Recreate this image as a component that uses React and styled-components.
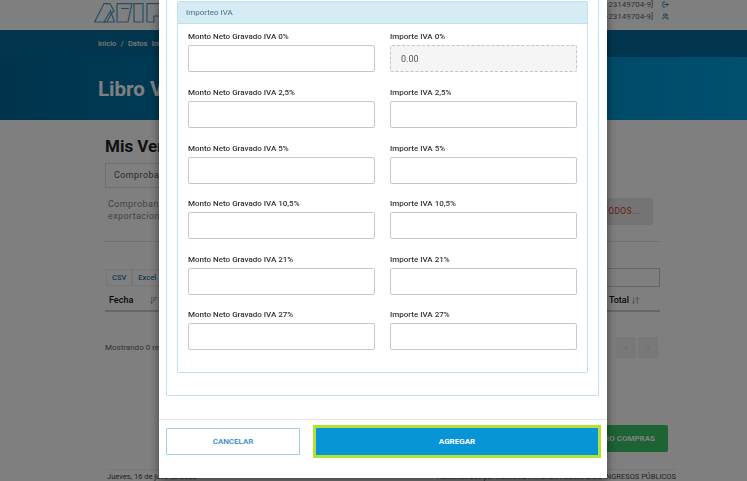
import React from "react";
import styled, { createGlobalStyle } from "styled-components";
import { LogOut, Users, ArrowDownUp, ArrowDownWideNarrow } from "lucide-react";

const Global = createGlobalStyle`
  html, body { margin: 0; padding: 0; height: 481px; overflow: hidden; background: #fff; }
  body { font-family: Roboto, "Liberation Sans", sans-serif; }
  * { box-sizing: border-box; }
`;

const Page = styled.div`
  width: 747px;
  height: 481px;
  overflow: hidden;
  display: flex;
  flex-direction: column;
  background: #fff;
`;
const TopBar = styled.header`
  height: 30px;
  flex: none;
  display: flex;
  align-items: flex-start;
  justify-content: space-between;
  padding: 3px 78px 0 94px;
`;
const UserList = styled.div`
  display: flex;
  flex-direction: column;
  gap: 3px;
  margin-top: -3px;
`;
const UserRow = styled.div`
  display: flex;
  align-items: center;
  gap: 9px;
  height: 9px;
  font-size: 8px;
  color: #666;
  svg { color: #1f7fb5; }
`;
const Crumbs = styled.nav`
  height: 27px;
  flex: none;
  background: #046c9e;
  padding-left: 98px;
  display: flex;
  align-items: center;
  font-size: 7.5px;
  font-weight: 500;
  color: #eee;
  word-spacing: 2.5px;
`;
const Banner = styled.div`
  height: 63px;
  flex: none;
  background: linear-gradient(90deg, #00689a 0%, #009fdf 100%);
  padding-left: 98px;
  display: flex;
  align-items: center;
`;
const BannerTitle = styled.h1`
  margin: 0;
  font-size: 20.5px;
  font-weight: 700;
  color: #fff;
`;
const Content = styled.main`
  flex: 1;
  padding: 16px 87px 0 105px;
  display: flex;
  flex-direction: column;
  min-height: 0;
`;
const SectionTitle = styled.h2`
  margin: 0;
  font-size: 17px;
  line-height: 20px;
  font-weight: 700;
  color: #222;
`;
const TabBox = styled.div`
  margin-top: 7px;
  height: 25px;
  width: 160px;
  border: 1px solid #ddd;
  padding-left: 8px;
  font-size: 9px;
  line-height: 23px;
  color: #555;
  letter-spacing: 0.4px;
`;
const IntroRow = styled.div`
  display: flex;
  justify-content: space-between;
  align-items: flex-start;
  margin-top: 10px;
  height: 45px;
  border-bottom: 1px dotted #ccc;
`;
const IntroText = styled.p`
  margin: 0 0 0 3px;
  width: 200px;
  font-size: 9px;
  line-height: 12px;
  color: #888;
  letter-spacing: 0.4px;
`;
const ResetButton = styled.div`
  width: 120px;
  height: 27px;
  margin-right: 7px;
  background: #e8e8e8;
  border-radius: 2px;
  color: #d9342b;
  font-size: 8.5px;
  line-height: 27px;
  text-align: right;
  padding-right: 13px;
  letter-spacing: 0.4px;
`;
const ToolRow = styled.div`
  display: flex;
  justify-content: space-between;
  align-items: center;
  margin-top: 26px;
  height: 20px;
`;
const ExportGroup = styled.div`
  display: flex;
  height: 17px;
  margin-left: 1px;
`;
const ExportBtn = styled.span`
  padding: 0 5px;
  border: 1px solid #eee;
  font-size: 7.5px;
  line-height: 15px;
  color: #2f74a8;
  font-weight: 500;
`;
const Search = styled.div`
  width: 150px;
  height: 19px;
  border: 1px solid #ccc;
`;
const TableHead = styled.div`
  display: flex;
  justify-content: space-between;
  align-items: center;
  height: 25px;
  border-bottom: 2px solid #ccc;
  padding: 3px 20px 0 4px;
  font-size: 9px;
  font-weight: 500;
  color: #111;
`;
const HeadCell = styled.span`
  display: flex;
  align-items: center;
  gap: ${(p) => p.$gap}px;
  svg { color: #999; }
`;
const PagerRow = styled.div`
  display: flex;
  justify-content: space-between;
  align-items: center;
  margin-top: 25px;
  height: 21px;
  font-size: 8px;
  color: #666;
`;
const Pager = styled.div`
  display: flex;
  gap: 2px;
  margin-right: 2px;
`;
const PageBtn = styled.span`
  width: 20px;
  height: 21px;
  background: #f0f0f0;
  color: #ccc;
  font-size: 9px;
  line-height: 21px;
  text-align: center;
`;
const ActionRow = styled.div`
  display: flex;
  justify-content: flex-end;
  margin: 67px -8px 0 0;
`;
const BuyButton = styled.div`
  width: 140px;
  height: 27px;
  background: #3ac667;
  border-radius: 2px;
  color: #fff;
  font-size: 8px;
  font-weight: 700;
  line-height: 27px;
  text-align: right;
  padding-right: 13px;
`;
const PageFoot = styled.footer`
  display: flex;
  justify-content: space-between;
  margin: 17px -16px 0 2px;
  border-top: 1px solid #eee;
  padding-top: 2px;
  font-size: 7.5px;
  color: #444;
  white-space: nowrap;
`;

const Overlay = styled.div`
  position: fixed;
  inset: 0;
  background: rgba(0, 0, 0, 0.5);
  display: flex;
  justify-content: center;
  align-items: flex-start;
  padding-left: 19px;
`;
const Modal = styled.div`
  width: 448px;
  height: 478px;
  background: #fff;
  box-shadow: 0 3px 9px rgba(0, 0, 0, 0.5);
  display: flex;
  flex-direction: column;
`;
const ModalBody = styled.div`
  height: 419px;
  flex: none;
  overflow: hidden;
  display: flex;
  flex-direction: column;
  justify-content: flex-end;
  padding: 0 8px 23px 7px;
`;
const OuterPanel = styled.div`
  flex: none;
  border: 1px solid #bfe0ef;
  border-top: 0;
  border-radius: 0 0 2px 2px;
  padding: 1px 10px 22px 10px;
`;
const InnerPanel = styled.section`
  border: 1px solid #bfe0ef;
  border-radius: 2px;
`;
const PanelHead = styled.div`
  height: 22px;
  background: #d6ecf5;
  border-bottom: 1px solid #bfe0ef;
  padding-left: 8px;
  font-size: 8px;
  line-height: 21px;
  color: #42708c;
`;
const FieldGrid = styled.div`
  display: grid;
  grid-template-columns: 187px 187px;
  column-gap: 15px;
  grid-auto-rows: 55.6px;
  padding: 6.5px 10px 8px;
`;
const Field = styled.label`
  display: flex;
  flex-direction: column;
`;
const FieldLabel = styled.span`
  height: 15px;
  font-size: 8px;
  line-height: 14px;
  font-weight: 500;
  color: #333;
  white-space: nowrap;
`;
const FieldInput = styled.input`
  height: 27px;
  width: 100%;
  margin: 0;
  padding: 0 10px;
  border: ${(p) => (p.readOnly ? "1px dashed #c4c4c4" : "1px solid #c8c8c8")};
  border-radius: 2px;
  background: ${(p) => (p.readOnly ? "#f5f5f5" : "#fff")};
  font-family: Roboto, sans-serif;
  font-size: 9px;
  color: #555;
  outline: none;
`;
const ModalFoot = styled.div`
  flex: 1;
  border-top: 1px solid #e5e5e5;
  display: flex;
  align-items: flex-start;
  padding: 5px 6px 0 7px;
  gap: 13px;
`;
const CancelBtn = styled.button`
  width: 134px;
  height: 27px;
  margin: 3px 0 0;
  background: #fff;
  border: 1px solid #9dd0e8;
  border-radius: 1px;
  color: #2f86c8;
  font-family: Roboto, sans-serif;
  font-size: 8px;
  font-weight: 500;
  padding: 0;
`;
const SubmitBtn = styled.button`
  width: 288px;
  height: 33px;
  margin: 0;
  background: #0795d8;
  border: 3px solid #b2e233;
  color: #fff;
  font-family: Roboto, sans-serif;
  font-size: 8px;
  font-weight: 700;
  padding: 0;
`;

const rates = ["0%", "2,5%", "5%", "10,5%", "21%", "27%"];

const Logo = () => (
  <svg width="76" height="20" viewBox="0 0 76 20" fill="none" stroke="#4a9fc7" strokeWidth="1.2">
    <path d="M0.6 19 L10 0.6 H16 L20 8 L17 11 L13 19 Z" />
    <path d="M10 19 L16.5 8 L20.5 19 Z" />
    <path d="M23 19 V0.6 H38 L34 19 Z" />
    <path d="M27 5.5 H35" />
    <path d="M40 0.6 H49 V19 H40 Z" />
    <path d="M53 0.6 H72 V13 H60 V19 H53 Z" />
  </svg>
);

export default function App() {
  return (
    <>
      <Global />
      <Page>
        <TopBar>
          <Logo />
          <UserList>
            <UserRow>
              [20-23149704-9]
              <LogOut size={7} strokeWidth={3} />
            </UserRow>
            <UserRow>
              [20-23149704-9]
              <Users size={7} strokeWidth={3} />
            </UserRow>
          </UserList>
        </TopBar>
        <Crumbs>Inicio / Datos Iniciales</Crumbs>
        <Banner>
          <BannerTitle>Libro Ventas y Compras</BannerTitle>
        </Banner>
        <Content>
          <SectionTitle>Mis Ventas</SectionTitle>
          <TabBox>Comprobantes</TabBox>
          <IntroRow>
            <IntroText>Comprobantes de ventas registrados, exportaciones y operaciones</IntroText>
            <ResetButton>BORRAR TODOS...</ResetButton>
          </IntroRow>
          <ToolRow>
            <ExportGroup>
              <ExportBtn>CSV</ExportBtn>
              <ExportBtn>Excel</ExportBtn>
            </ExportGroup>
            <Search />
          </ToolRow>
          <TableHead>
            <HeadCell $gap={16}>
              Fecha
              <ArrowDownWideNarrow size={9} />
            </HeadCell>
            <HeadCell $gap={2}>
              Total
              <ArrowDownUp size={9} />
            </HeadCell>
          </TableHead>
          <PagerRow>
            <span>Mostrando 0 registros</span>
            <Pager>
              <PageBtn>‹</PageBtn>
              <PageBtn>›</PageBtn>
            </Pager>
          </PagerRow>
          <ActionRow>
            <BuyButton>LIBRO COMPRAS</BuyButton>
          </ActionRow>
          <PageFoot>
            <span>Jueves, 16 de julio de 2020</span>
            <span>Administrado por ADMINISTRACIÓN FEDERAL DE INGRESOS PÚBLICOS</span>
          </PageFoot>
        </Content>
      </Page>
      <Overlay>
        <Modal>
          <ModalBody>
            <OuterPanel>
              <InnerPanel>
                <PanelHead>Importeo IVA</PanelHead>
                <FieldGrid>
                  {rates.map((r, i) => (
                    <React.Fragment key={r}>
                      <Field>
                        <FieldLabel>Monto Neto Gravado IVA {r}</FieldLabel>
                        <FieldInput />
                      </Field>
                      <Field>
                        <FieldLabel>Importe IVA {r}</FieldLabel>
                        {i === 0 ? <FieldInput readOnly value="0.00" /> : <FieldInput />}
                      </Field>
                    </React.Fragment>
                  ))}
                </FieldGrid>
              </InnerPanel>
            </OuterPanel>
          </ModalBody>
          <ModalFoot>
            <CancelBtn>CANCELAR</CancelBtn>
            <SubmitBtn>AGREGAR</SubmitBtn>
          </ModalFoot>
        </Modal>
      </Overlay>
    </>
  );
}
